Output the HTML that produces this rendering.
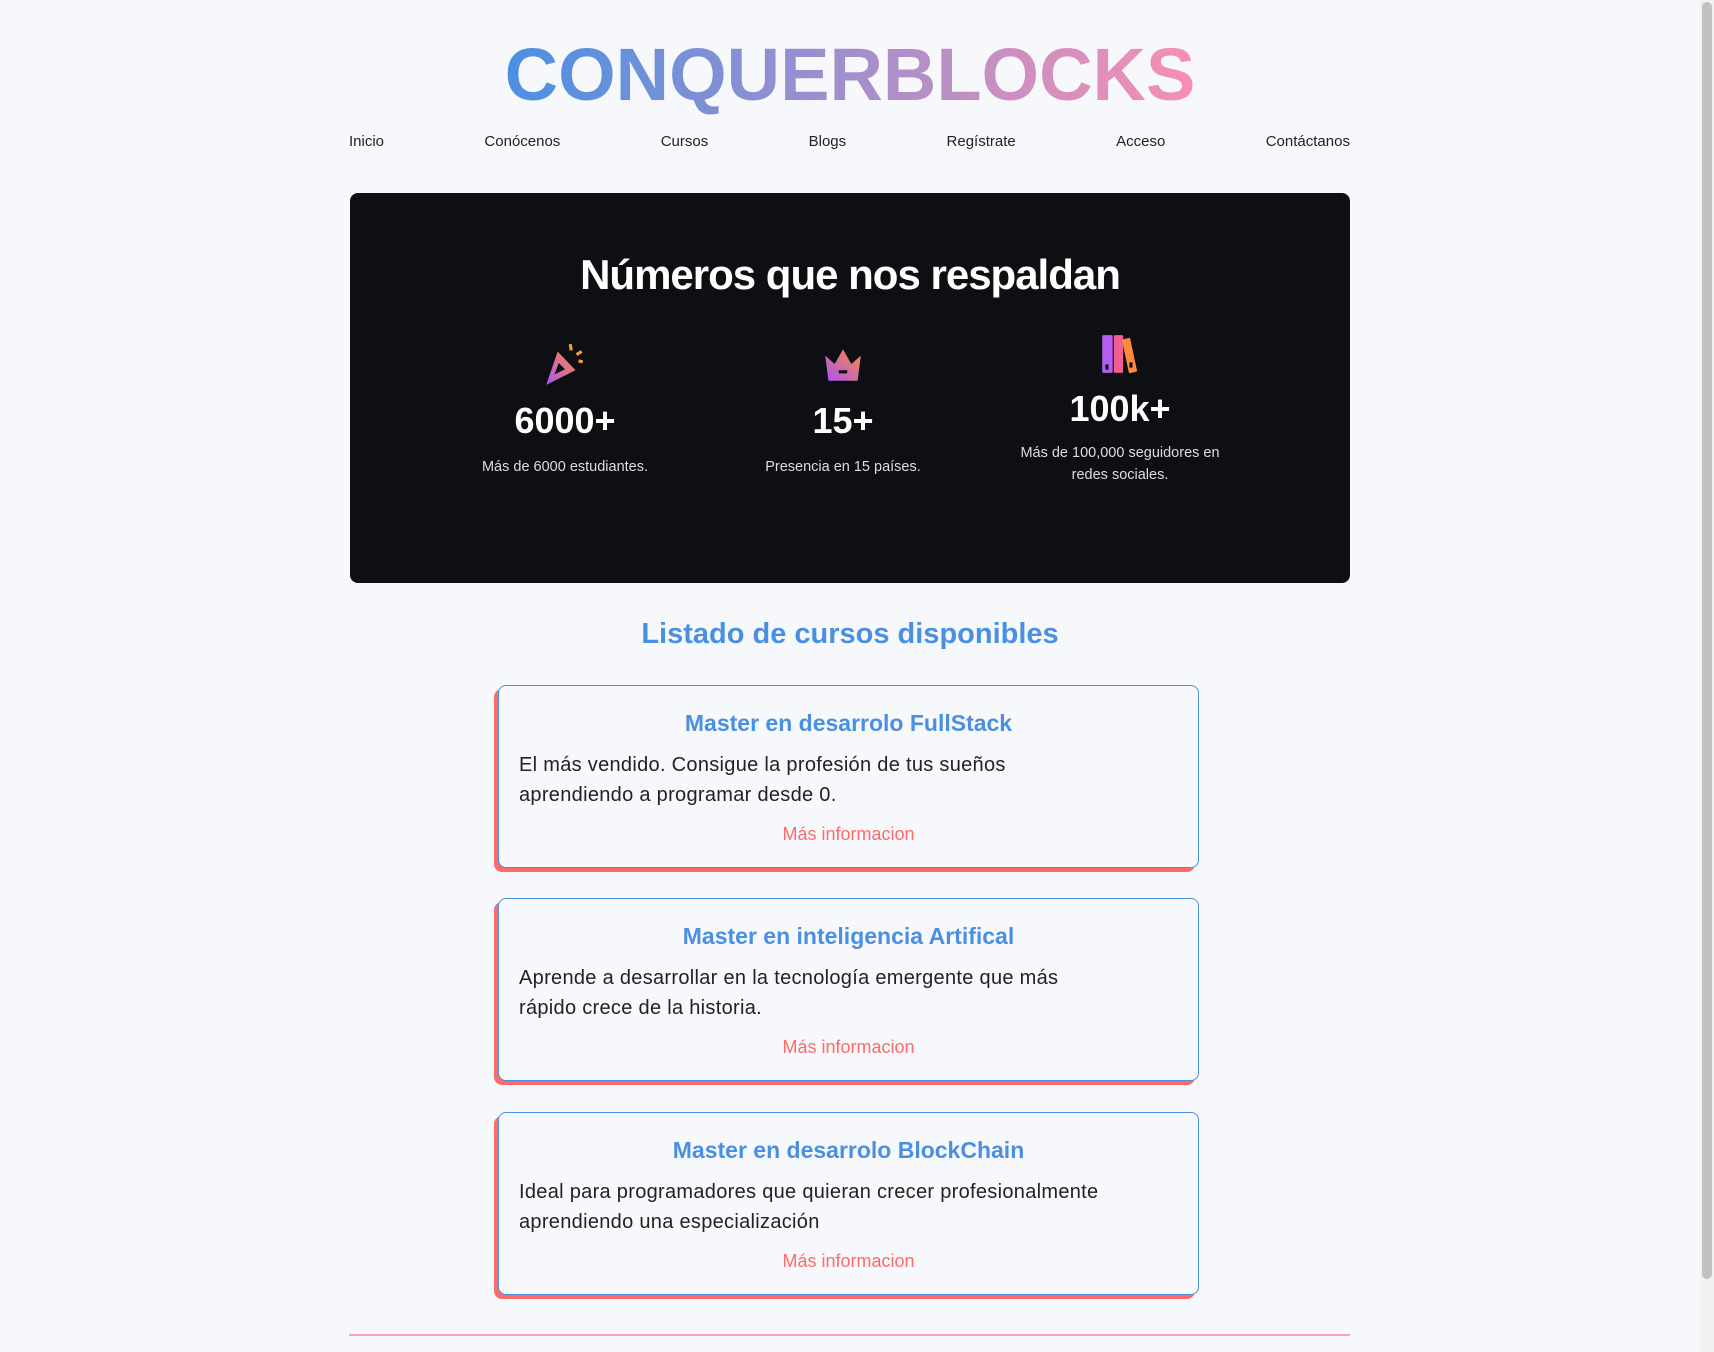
<!DOCTYPE html>
<html><head><meta charset="utf-8"><style>
*{margin:0;padding:0;box-sizing:border-box}
html,body{width:1714px;height:1352px;overflow:hidden;background:#f7f8fc;font-family:"Liberation Sans",sans-serif;color:#222}
.logowrap{position:absolute;left:0;width:1700px;top:30px;text-align:center}
.logo{display:inline-block;font-size:74px;font-weight:bold;letter-spacing:0px;background:linear-gradient(90deg,#4a90e2 0%,#9b8fce 45%,#f78fb3 100%);-webkit-background-clip:text;background-clip:text;color:transparent;line-height:90px}
nav{position:absolute;left:349px;width:1001px;top:133px;display:flex;justify-content:space-between;font-size:15px;color:#222}
.dark{position:absolute;left:350px;top:193px;width:1000px;height:390px;background:#0d0f13;border-radius:8px;color:#fff}
.col{position:absolute;width:240px;text-align:center}
.num{font-size:36px;font-weight:bold;color:#fff}
.cap{font-size:14.5px;color:#ddd;line-height:22px}
.card{position:absolute;left:498px;width:701px;height:183px;border:1px solid #4a90e2;border-radius:8px;box-shadow:-4px 4px 0 #ff6b6b;background:#f7f8fc;text-align:center}
.card h3{font-size:23px;color:#4a90e2;margin-top:22px;line-height:30px}
.card p{text-align:left;padding:0 20px;font-size:20px;line-height:30px;margin-top:12px;color:#222;letter-spacing:0.3px}
.card a{display:block;color:#ff6b6b;font-size:18px;margin-top:14px;text-decoration:none}
</style></head><body>
<div class="logowrap"><span class="logo">CONQUERBLOCKS</span></div>
<nav><span>Inicio</span><span>Conócenos</span><span>Cursos</span><span>Blogs</span><span>Regístrate</span><span>Acceso</span><span>Contáctanos</span></nav>
<div class="dark">
<div style="position:absolute;left:0;right:0;top:58px;text-align:center;font-size:42px;font-weight:bold;letter-spacing:-1px">Números que nos respaldan</div>
<svg width="0" height="0" style="position:absolute"><defs><linearGradient id="g" x1="0" y1="1" x2="1" y2="0"><stop offset="0" stop-color="#a855f7"/><stop offset="1" stop-color="#ff8a3d"/></linearGradient></defs></svg>
<div class="col" style="left:95px;top:148px">
<svg width="46" height="46" viewBox="0 0 44 44"><path d="M4 42 L15 10 L32 28 Z" fill="url(#g)"/><path d="M12 32 L16 21 L22 27 Z" fill="#0d0f13"/><path d="M27 3 l1 6 M38 10 l-5 3 M39 20 l-4 -1" stroke="#ff9a3d" stroke-width="3" fill="none"/></svg>
<div class="num" style="margin-top:8px">6000+</div><div class="cap" style="margin-top:14px">Más de 6000 estudiantes.</div></div>
<div class="col" style="left:373px;top:148px">
<svg width="46" height="46" viewBox="0 0 44 44"><path d="M5 14 L14 22 L22 8 L30 22 L39 14 L36 38 L8 38 Z" fill="url(#g)"/><rect x="18" y="28" width="8" height="3" fill="#0d0f13"/></svg>
<div class="num" style="margin-top:8px">15+</div><div class="cap" style="margin-top:14px">Presencia en 15 países.</div></div>
<div class="col" style="left:650px;top:138px">
<svg width="46" height="46" viewBox="0 0 44 44"><rect x="5" y="4" width="10" height="36" rx="1" fill="#b45ef0"/><rect x="16" y="4" width="9" height="36" rx="1" fill="#ef5f8f"/><rect x="27" y="7" width="8" height="33" rx="1" transform="rotate(-12 31 23)" fill="#ff8a3d"/><rect x="8" y="32" width="3" height="5" fill="#0d0f13"/><rect x="31" y="30" width="3" height="5" fill="#0d0f13"/></svg>
<div class="num" style="margin-top:6px">100k+</div><div class="cap" style="margin-top:12px">Más de 100,000 seguidores en<br>redes sociales.</div></div>
</div>
<div style="position:absolute;left:0;width:1700px;top:618px;text-align:center;font-size:29px;font-weight:bold;color:#4a90e2">Listado de cursos disponibles</div>
<div class="card" style="top:685px"><h3>Master en desarrolo FullStack</h3><p>El más vendido. Consigue la profesión de tus sueños<br>aprendiendo a programar desde 0.</p><a>Más informacion</a></div>
<div class="card" style="top:898px"><h3>Master en inteligencia Artifical</h3><p>Aprende a desarrollar en la tecnología emergente que más<br>rápido crece de la historia.</p><a>Más informacion</a></div>
<div class="card" style="top:1112px"><h3>Master en desarrolo BlockChain</h3><p>Ideal para programadores que quieran crecer profesionalmente<br>aprendiendo una especialización</p><a>Más informacion</a></div>
<div style="position:absolute;left:349px;width:1001px;top:1334px;height:2px;background:#f5a3b5"></div>
<div style="position:absolute;left:1700px;top:0;width:14px;height:1352px;background:#f1f1f1"></div>
<div style="position:absolute;left:1702px;top:2px;width:10px;height:1277px;background:#c1c1c1;border-radius:5px"></div>
</body></html>
